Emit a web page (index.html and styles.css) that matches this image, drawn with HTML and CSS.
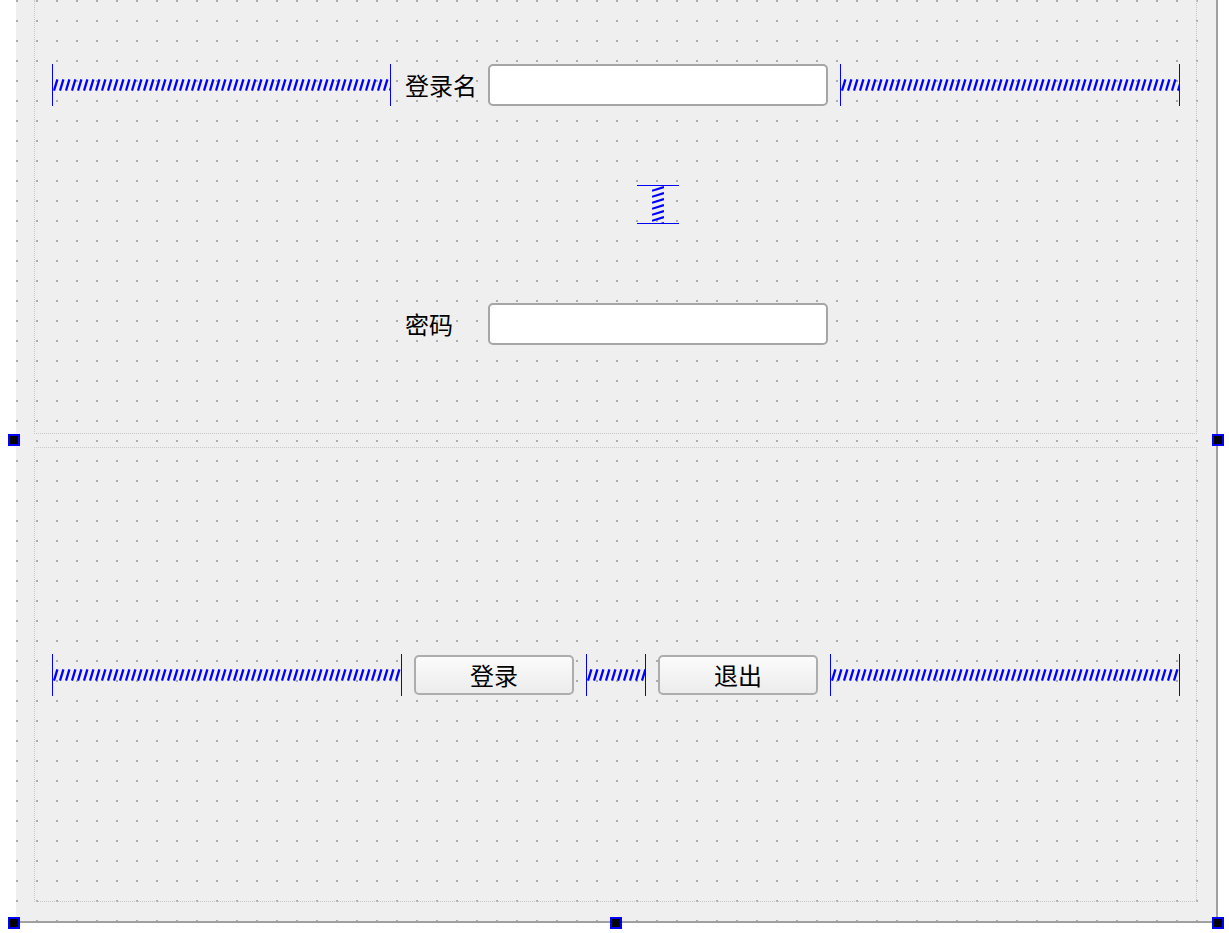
FILE: index.html
```html
<!DOCTYPE html>
<html lang="zh-CN">
<head>
<meta charset="utf-8">
<title>登录</title>
<link rel="stylesheet" href="styles.css">
</head>
<body>
<svg class="defs" width="0" height="0" aria-hidden="true">
  <defs>
    <pattern id="hspring" patternUnits="userSpaceOnUse" width="6" height="12">
      <path d="M1 11.6 L4.4 0.4" stroke="#0000ff" stroke-width="2.3" fill="none"/>
    </pattern>
    <pattern id="vspring" patternUnits="userSpaceOnUse" width="12" height="6">
      <path d="M0 4.8 L12 1" stroke="#0000ff" stroke-width="2.2" fill="none"/>
    </pattern>
  </defs>
</svg>
<div class="stage">
  <div class="form">
    <div class="layout layout-top">
      <div class="grid">
        <div class="hspacer"><svg class="hspring"><rect width="100%" height="100%" fill="url(#hspring)"/></svg></div>
        <div class="lbl">登录名</div>
        <div class="edit"></div>
        <div class="hspacer"><svg class="hspring"><rect width="100%" height="100%" fill="url(#hspring)"/></svg></div>
        <div class="vspacer"><svg class="vspring"><rect width="100%" height="100%" fill="url(#vspring)"/></svg></div>
        <div class="lbl lbl-pw">密码</div>
        <div class="edit edit-pw"></div>
      </div>
    </div>
    <div class="layout layout-bottom">
      <div class="btnrow">
        <div class="hspacer w350"><svg class="hspring"><rect width="100%" height="100%" fill="url(#hspring)"/></svg></div>
        <div class="btn">登录</div>
        <div class="hspacer w60"><svg class="hspring"><rect width="100%" height="100%" fill="url(#hspring)"/></svg></div>
        <div class="btn">退出</div>
        <div class="hspacer w350"><svg class="hspring"><rect width="100%" height="100%" fill="url(#hspring)"/></svg></div>
      </div>
    </div>
  </div>
  <div class="handle h-lm"></div>
  <div class="handle h-rm"></div>
  <div class="handle h-bl"></div>
  <div class="handle h-bm"></div>
  <div class="handle h-br"></div>
</div>
</body>
</html>
```
FILE: styles.css
```css
* { box-sizing: border-box; }
html, body { margin: 0; padding: 0; background: #ffffff; }
body { font-family: "Noto Sans CJK SC", "Noto Sans", sans-serif; color: #000; }
.defs { position: absolute; width: 0; height: 0; }

.stage { position: relative; width: 1229px; height: 933px; overflow: hidden; }

.form {
  position: relative;
  z-index: 0;
  margin-left: 16px;
  width: 1202px;
  height: 923px;
  background-color: #efefef;
  border-right: 2px solid #a0a0a0;
  border-bottom: 2px solid #a0a0a0;
  padding-left: 18px;
  display: flex;
  flex-direction: column;
}
.form::before {
  content: "";
  position: absolute;
  z-index: -1;
  inset: 0;
  background-image: repeating-linear-gradient(to right, #adadad 0 2px, transparent 2px 20px);
  -webkit-mask-image: repeating-linear-gradient(to bottom, #000 0 2px, transparent 2px 20px);
  mask-image: repeating-linear-gradient(to bottom, #000 0 2px, transparent 2px 20px);
}

.layout { width: 1163px; border: 1px dotted #c8c8c8; }
.layout-top { height: 434px; border-top: none; padding: 64px 0 0 17px; }
.layout-bottom { margin-top: 13px; height: 455px; padding: 206px 0 0 17px; }

.grid {
  display: grid;
  grid-template-columns: 339px 73px 340px 340px;
  grid-template-rows: 42px 39px 42px;
  column-gap: 12px;
  row-gap: 79px;
}

.hspacer {
  height: 42px;
  border-left: 1px solid #0000ff;
  border-right: 1px solid #0000ff;
  display: flex;
  align-items: center;
}
.hspring { display: block; width: 100%; height: 12px; }
.w350 { width: 350px; flex: none; }
.w60 { width: 60px; flex: none; }

.vspacer {
  grid-column: 3;
  grid-row: 2;
  justify-self: center;
  width: 42px;
  border-top: 1px solid #0000ff;
  border-bottom: 1px solid #0000ff;
  display: flex;
  justify-content: center;
}
.vspring { display: block; width: 12px; height: 100%; }

.lbl {
  font-size: 24px;
  line-height: 1;
  align-self: center;
  padding-left: 2px;
  white-space: nowrap;
}
.lbl-pw { grid-column: 2; grid-row: 3; }

.edit {
  background: #ffffff;
  border: 2px solid #a6a6a6;
  border-radius: 5px;
}
.edit-pw { grid-column: 3; grid-row: 3; }

.btnrow { display: flex; align-items: center; gap: 12px; height: 42px; }
.btn {
  flex: none;
  width: 160px;
  height: 40px;
  border: 2px solid #adadad;
  border-radius: 5px;
  background: linear-gradient(to bottom, #fbfbfb, #ececec);
  font-size: 24px;
  line-height: 36px;
  text-align: center;
}

.handle {
  position: absolute;
  width: 12px;
  height: 12px;
  background: #000;
  border: 2px solid #0000ff;
}
.h-lm { left: 8px; top: 434px; }
.h-rm { left: 1212px; top: 434px; }
.h-bl { left: 8px; top: 917px; }
.h-bm { left: 610px; top: 917px; }
.h-br { left: 1212px; top: 917px; }
```
